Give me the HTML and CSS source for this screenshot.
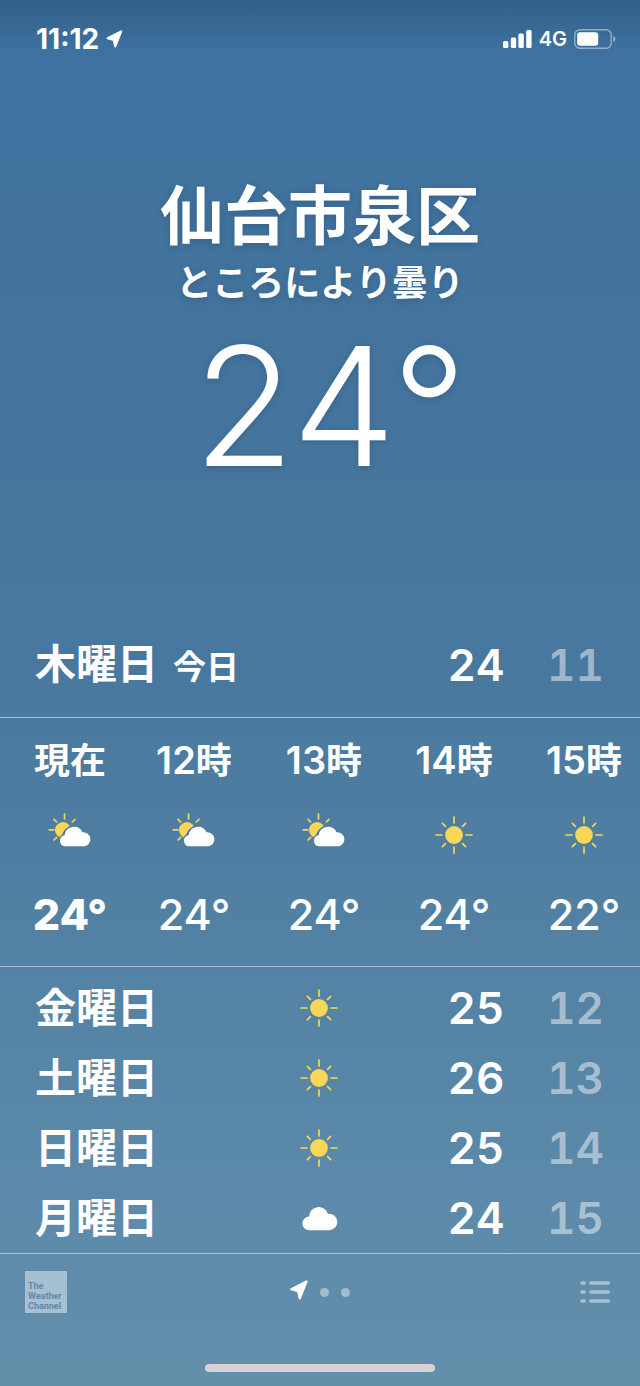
FILE: index.html
```html
<!DOCTYPE html>
<html lang="ja">
<head>
<meta charset="utf-8">
<meta name="viewport" content="width=device-width, initial-scale=1">
<title>天気</title>
<link rel="stylesheet" href="styles.css">
</head>
<body>
<svg width="0" height="0" class="sprite" aria-hidden="true">
  <symbol id="arrow" viewBox="0 0 18 20">
    <path d="M16.4 1.6 1.4 9.2 8.2 11.2 9.8 18.2Z" fill="currentColor" stroke="currentColor" stroke-width="2.4" stroke-linejoin="round"/>
  </symbol>
  <symbol id="sun" viewBox="0 0 38 38">
    <circle cx="19" cy="19" r="8.9" fill="#f7d755"/>
    <path d="M19 1v6M19 31v6M1 19h6M31 19h6M7.4 7.4l3 3M27.6 27.6l3 3M7.4 30.6l3-3M27.6 10.4l3-3" stroke="#f7d755" stroke-width="1.7" stroke-linecap="round"/>
  </symbol>
  <symbol id="partly" viewBox="0 0 44 34">
    <path d="M14.3 24.9A7.9 7.9 0 1 1 22 13.6A13 13 0 0 0 14.3 21Z" fill="#f7d755"/>
    <path d="M16.5 1.2v4.6M1.2 16.8h4.6M6 6.3l2.7 2.7M27 6.3l-2.7 2.7M6 27l2.7-2.7" stroke="#f7d755" stroke-width="1.7" stroke-linecap="round"/>
    <path d="M17.5 33.3A5.6 5.6 0 0 1 16.6 22.2A9.4 9.4 0 0 1 34.5 19.3A7 7 0 1 1 36.2 33.3Z" stroke="#4f7ea2" stroke-width="3"/>
    <path d="M17.5 33.3A5.6 5.6 0 0 1 16.6 22.2A9.4 9.4 0 0 1 34.5 19.3A7 7 0 1 1 36.2 33.3Z" fill="#fff"/>
  </symbol>
  <symbol id="cloud" viewBox="0 0 38 38">
    <path d="M9.2 31.2A6.8 6.8 0 0 1 9.1 17.6A9.6 9.6 0 0 1 27.9 14.9A8.2 8.2 0 1 1 29.5 31.2Z" fill="#fff"/>
  </symbol>
</svg>

<header class="status">
  <div class="status-group">
    <time class="clock">11:12</time>
    <svg class="status-arrow" aria-label="位置情報"><use href="#arrow"/></svg>
  </div>
  <div class="status-group">
    <svg class="signal" viewBox="0 0 29 18" aria-label="電波">
      <g fill="#fff"><rect y="11" width="5.4" height="7" rx="1.5"/><rect x="7.8" y="7.4" width="5.4" height="10.6" rx="1.5"/><rect x="15.4" y="3.6" width="5.4" height="14.4" rx="1.5"/><rect x="23.2" width="5.4" height="18" rx="1.5"/></g>
    </svg>
    <span class="network">4G</span>
    <svg class="battery" viewBox="0 0 42 20" aria-label="バッテリー">
      <rect x=".8" y=".8" width="36.4" height="18.4" rx="5" fill="none" stroke="#fff" stroke-opacity=".45" stroke-width="1.4"/>
      <rect x="3.2" y="3.2" width="21" height="13.6" rx="2.8" fill="#fff"/>
      <path d="M39.4 7v6q2-1 2-3t-2-3Z" fill="#fff" fill-opacity=".5"/>
    </svg>
  </div>
</header>

<main>
  <section class="hero">
    <h1 class="city">仙台市泉区</h1>
    <p class="condition">ところにより曇り</p>
    <p class="now">24°</p>
  </section>

  <table class="days today">
    <tr><th scope="row" class="day">木曜日<span class="today-label">今日</span></th><td class="high">24</td><td class="low">11</td></tr>
  </table>

  <ol class="hours">
    <li class="hour current"><span class="hour-label"><span class="unit">現在</span></span><svg class="partly"><use href="#partly"/></svg><span class="degrees">24°</span></li>
    <li class="hour"><span class="hour-label">12<span class="unit">時</span></span><svg class="partly"><use href="#partly"/></svg><span class="degrees">24°</span></li>
    <li class="hour"><span class="hour-label">13<span class="unit">時</span></span><svg class="partly"><use href="#partly"/></svg><span class="degrees">24°</span></li>
    <li class="hour"><span class="hour-label">14<span class="unit">時</span></span><svg class="icon"><use href="#sun"/></svg><span class="degrees">24°</span></li>
    <li class="hour"><span class="hour-label">15<span class="unit">時</span></span><svg class="icon"><use href="#sun"/></svg><span class="degrees">22°</span></li>
  </ol>

  <table class="days week">
    <tr><th scope="row" class="day">金曜日</th><td class="sky"><svg class="icon"><use href="#sun"/></svg></td><td class="high">25</td><td class="low">12</td></tr>
    <tr><th scope="row" class="day">土曜日</th><td class="sky"><svg class="icon"><use href="#sun"/></svg></td><td class="high">26</td><td class="low">13</td></tr>
    <tr><th scope="row" class="day">日曜日</th><td class="sky"><svg class="icon"><use href="#sun"/></svg></td><td class="high">25</td><td class="low">14</td></tr>
    <tr><th scope="row" class="day">月曜日</th><td class="sky"><svg class="icon"><use href="#cloud"/></svg></td><td class="high">24</td><td class="low">15</td></tr>
  </table>
</main>

<footer class="toolbar">
  <a class="provider" href="#">The<br>Weather<br>Channel</a>
  <nav class="pages" aria-label="地点">
    <svg class="page-arrow"><use href="#arrow"/></svg>
    <span class="dot"></span>
    <span class="dot"></span>
  </nav>
  <button class="list-button" type="button" aria-label="地点リスト">
    <svg class="list-icon" viewBox="0 0 30 22"><path d="M2 2h2.2M2 11h2.2M2 20h2.2M11 2h17.2M11 11h17.2M11 20h17.2" stroke="currentColor" stroke-width="3.6" stroke-linecap="round"/></svg>
  </button>
</footer>
<div class="home-indicator"></div>
</body>
</html>
```

FILE: styles.css
```css
* {
  box-sizing: border-box;
}

body {
  display: flex;
  flex-direction: column;
  min-height: 100vh;
  margin: 0;
  color: #fff;
  background:
    linear-gradient(rgba(30, 55, 80, 0.3), rgba(30, 55, 80, 0) 50px),
    linear-gradient(#3d71a0, #42739d 20%, #49789f 48%, #5482a4 70%, #5f8cab 91%, #648fab);
  font-family: Inter, "Noto Sans CJK JP", sans-serif;
  font-weight: 500;
}

h1,
p,
ol {
  margin: 0;
  padding: 0;
}

.sprite {
  position: absolute;
}

svg {
  display: block;
  fill: none;
}

.status {
  display: flex;
  justify-content: space-between;
  align-items: center;
  height: 78px;
  padding: 0 24px 0 36px;
}

.status-group {
  display: flex;
  align-items: center;
  gap: 7px;
}

.clock {
  font-size: 28px;
  font-weight: 700;
}

.status-arrow {
  width: 17px;
  height: 18px;
}

.signal {
  width: 29px;
  height: 18px;
}

.network {
  font-size: 20px;
  font-weight: 600;
}

.battery {
  width: 42px;
  height: 20px;
}

.hero {
  display: flex;
  flex-direction: column;
  align-items: center;
  padding: 92px 20px 122px;
  text-shadow: 0 2px 6px rgba(20, 50, 80, 0.25);
}

.city {
  font-size: 64px;
  font-weight: 700;
  line-height: 92px;
}

.condition {
  font-size: 36px;
  font-weight: 600;
  line-height: 42px;
}

.now {
  padding-left: 20px;
  font-size: 165px;
  font-weight: 300;
  line-height: 204px;
}

.days {
  width: 100%;
  padding: 0 36px 0 35px;
  border-spacing: 0;
  table-layout: fixed;
  font-size: 44px;
  font-weight: 600;
}

.days th,
.days td {
  height: 70px;
  padding: 0;
  line-height: 60px;
}

.day {
  width: 40%;
  font-size: 41px;
  font-weight: 600;
  text-align: left;
  white-space: nowrap;
}

.today .day {
  width: 60%;
}

.today-label {
  margin-left: 15px;
  font-size: 33px;
}

.sky {
  width: 20%;
}

.sky .icon {
  margin: 0 auto;
}

.high,
.low {
  text-align: right;
  font-variant-numeric: tabular-nums;
}

.low {
  width: 17.5%;
  color: rgba(255, 255, 255, 0.48);
}

.icon {
  width: 38px;
  height: 38px;
}

.today {
  padding-bottom: 17px;
}

.hours {
  display: flex;
  padding: 0 0 6px 11px;
  overflow-x: auto;
  scrollbar-width: none;
  list-style: none;
  border-top: 1px solid rgba(255, 255, 255, 0.5);
  border-bottom: 1px solid rgba(255, 255, 255, 0.5);
}

.hour {
  display: grid;
  flex: 1 0 130px;
  grid-template-rows: 84px 66px 92px;
  align-items: center;
  justify-items: center;
}

.hour.current {
  flex-basis: 118px;
}

.hour-label {
  font-size: 38px;
  font-weight: 600;
  line-height: 60px;
}

.unit {
  font-size: 36px;
}

.degrees {
  font-size: 43px;
  line-height: 60px;
}

.current .hour-label {
  font-weight: 700;
}

.current .degrees {
  font-weight: 800;
}

.partly {
  width: 44px;
  height: 34px;
  margin-bottom: 10px;
}

.week {
  padding-top: 6px;
}

.toolbar {
  display: grid;
  grid-template-columns: 1fr auto 1fr;
  align-items: center;
  padding: 17px 30px 0 25px;
  border-top: 1px solid rgba(255, 255, 255, 0.5);
}

.provider {
  display: flex;
  align-items: flex-end;
  width: 42px;
  height: 42px;
  padding: 0 0 2px 3px;
  color: #5d8aab;
  background: rgba(255, 255, 255, 0.45);
  font-family: Roboto, sans-serif;
  font-size: 9px;
  font-weight: 700;
  line-height: 10px;
  text-decoration: none;
}

.pages {
  display: flex;
  align-items: center;
  gap: 12px;
  padding-left: 5px;
}

.page-arrow {
  width: 18px;
  height: 20px;
  margin-bottom: 4px;
}

.dot {
  width: 9px;
  height: 9px;
  border-radius: 50%;
  background: rgba(255, 255, 255, 0.42);
}

.list-button {
  justify-self: end;
  padding: 0;
  color: rgba(255, 255, 255, 0.45);
  background: none;
  border: 0;
}

.list-icon {
  width: 30px;
  height: 22px;
}

.home-indicator {
  width: 36%;
  height: 8px;
  margin: auto auto 14px;
  border-radius: 4px;
  background: #d4d4d4;
}
```
